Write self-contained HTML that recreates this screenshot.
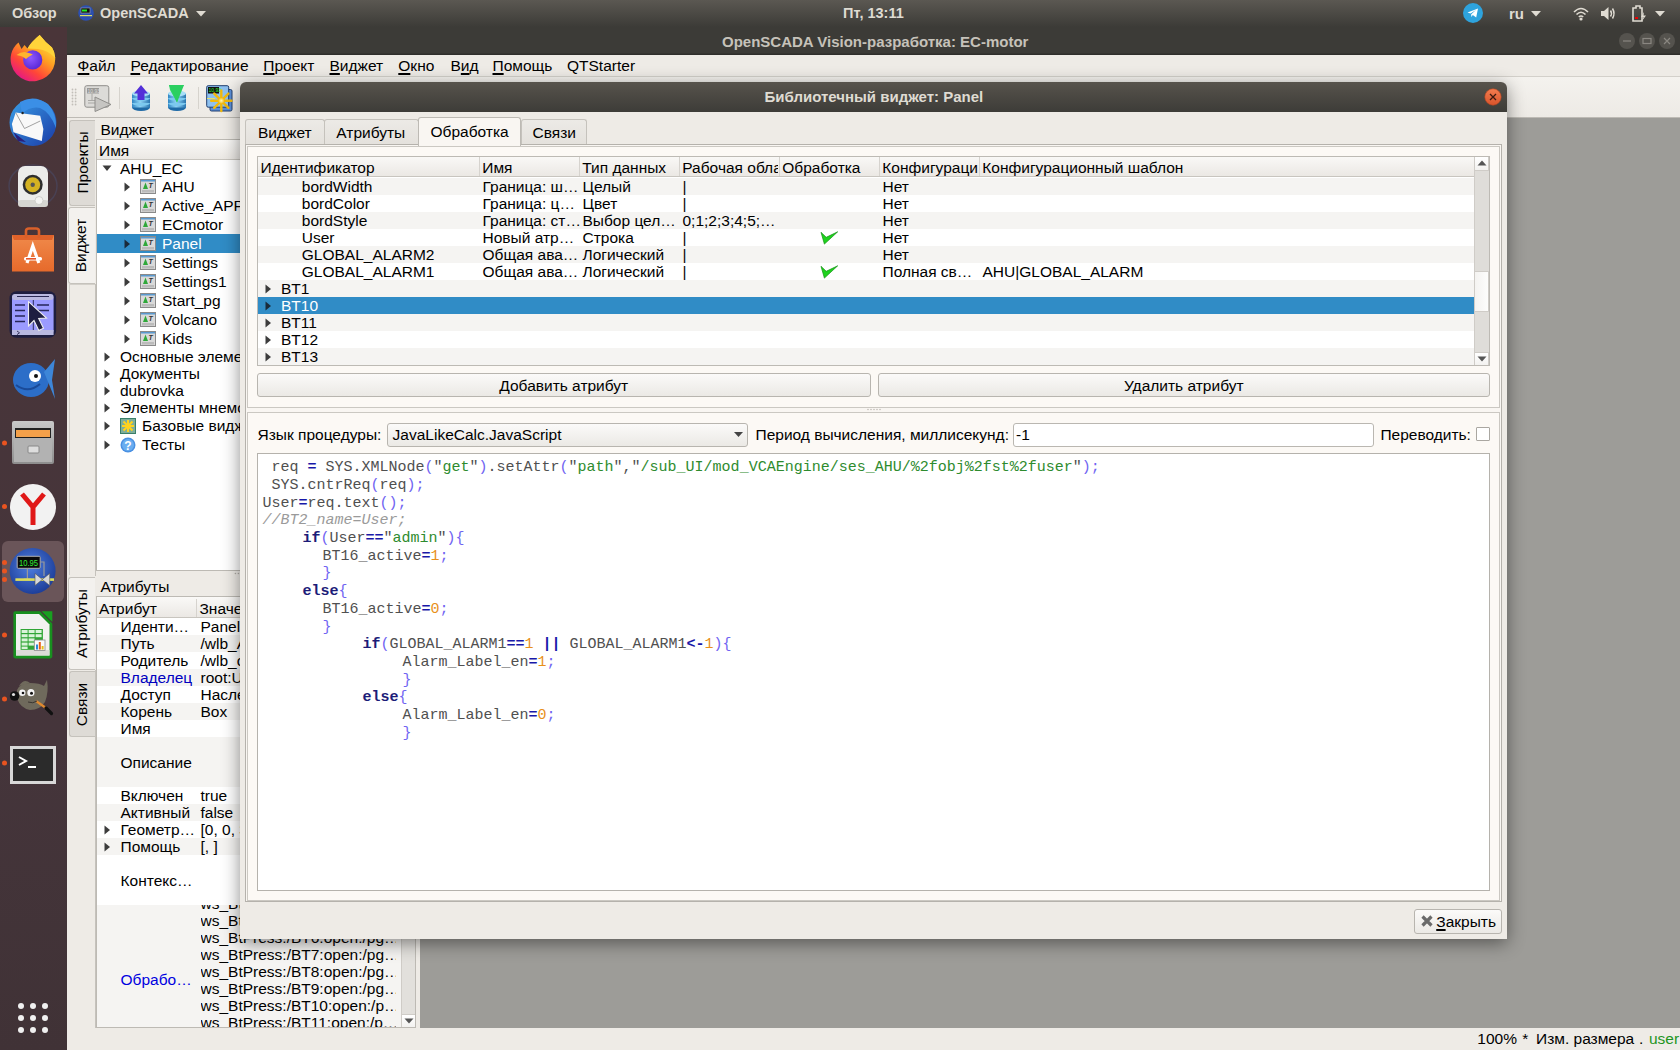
<!DOCTYPE html>
<html><head><meta charset="utf-8">
<style>
*{box-sizing:border-box}
html,body{margin:0;padding:0}
body{width:1680px;height:1050px;overflow:hidden;position:relative;font-family:"Liberation Sans",sans-serif;font-size:15.5px;color:#000;background:#9d9c98}
.a{position:absolute}
u{text-decoration-thickness:1.6px;text-underline-offset:2.2px}
.t{position:absolute;white-space:nowrap;line-height:17px}
#top{left:0;top:0;width:1680px;height:27px;background:linear-gradient(#5b5852,#3c3b37)}
#top .t{color:#dfdbd2;font-weight:bold;font-size:14.5px}
#dock{left:0;top:27px;width:67px;height:1023px;background:linear-gradient(#4a3539,#45353b 70%,#403236)}
#wt{left:67px;top:27px;width:1613px;height:28px;background:linear-gradient(#3c3b37 0,#3c3b37 26px,#2f2e2b 27px,#2f2e2b 28px)}
#menu{left:67px;top:55px;width:1613px;height:22px;background:#eeebe6;border-bottom:1px solid #d3d0ca}
#tool{left:67px;top:77px;width:1613px;height:41px;background:linear-gradient(#f4f2ee,#edeae5);border-bottom:1px solid #bdbab4}
#ldock{left:67px;top:118px;width:353px;height:910px;background:#eeebe6}
#mdi{left:422px;top:119px;width:1258px;height:909px;background:#9d9c98}
#status{left:67px;top:1028px;width:1613px;height:22px;background:#eeebe6}
#dlg{left:240px;top:82px;width:1267px;height:857px;background:#eeebe6;border-radius:6px 6px 0 0;box-shadow:0 4px 18px rgba(0,0,0,.45)}
#dtitle{left:0;top:0;width:1267px;height:30px;border-radius:6px 6px 0 0;background:linear-gradient(#57534c,#3d3c38)}
.vt{display:flex;align-items:center;justify-content:center}.vt span{display:block;transform:rotate(-90deg);white-space:nowrap;line-height:17px}
.btn{background:linear-gradient(#fbfaf9,#ebe9e5);border:1px solid #b8b5af;border-radius:3px}
.cl{position:absolute;white-space:pre;font-family:"Liberation Mono",monospace;font-size:15px;line-height:17.71px;color:#505050}
.cl .k{color:#1c1c78;font-weight:bold}.cl .o{color:#1818a8;font-weight:bold}.cl .p{color:#7064f2}.cl .s{color:#2e8b2e}.cl .n{color:#e8901a}.cl .c{color:#9a9a9a;font-style:italic}
</style></head><body>
<div id="top" class="a">
  <div class="t" style="left:12px;top:5px">Обзор</div>
  <svg class="a" style="left:78px;top:5px" width="16" height="16"><circle cx="8" cy="8" r="7.8" fill="#2c4fb0"/><rect x="3" y="3" width="9" height="5" fill="#111" stroke="#aaa" stroke-width=".6"/><rect x="4" y="4.5" width="5" height="2" fill="#2e2"/><rect x="2" y="10" width="12" height="1.2" fill="#dd6"/></svg>
  <div class="t" style="left:100px;top:5px">OpenSCADA</div>
  <svg class="a" style="left:196px;top:11px" width="10" height="6"><path d="M0 0 L10 0 L5 5.5 Z" fill="#dfdbd2"/></svg>
  <div class="t" style="left:843px;top:5px">Пт, 13:11</div>
  <svg class="a" style="left:1463px;top:3px" width="20" height="20"><circle cx="10" cy="10" r="10" fill="#2ea3dd"/><path d="M4.5 9.5 L15 5.5 L13.2 14.5 L9.8 12 L8.3 14 L8.2 11.2 L13 7 L7.5 10.6 Z" fill="#fff"/></svg>
  <div class="t" style="left:1509px;top:5px;font-size:15px">ru</div>
  <svg class="a" style="left:1531px;top:11px" width="10" height="6"><path d="M0 0 L10 0 L5 5.5 Z" fill="#dfdbd2"/></svg>
  <svg class="a" style="left:1573px;top:6px" width="16" height="15"><path d="M1 6 Q8 -1 15 6" stroke="#dfdbd2" stroke-width="1.6" fill="none"/><path d="M3.5 8.5 Q8 4 12.5 8.5" stroke="#dfdbd2" stroke-width="1.6" fill="none"/><path d="M5.8 11 Q8 9 10.2 11" stroke="#dfdbd2" stroke-width="1.6" fill="none"/><circle cx="8" cy="13" r="1.6" fill="#dfdbd2"/></svg>
  <svg class="a" style="left:1600px;top:6px" width="17" height="15"><path d="M1 5 L4 5 L8.5 1 L8.5 14 L4 10 L1 10 Z" fill="#dfdbd2"/><path d="M10.5 4.5 Q12.5 7.5 10.5 10.5 M12.5 2.5 Q15.5 7.5 12.5 12.5" stroke="#dfdbd2" stroke-width="1.5" fill="none"/></svg>
  <svg class="a" style="left:1631px;top:5px" width="16" height="17"><path d="M2 3 L5 3 L5 1 L9 1 L9 3 L11 3 L11 16 L2 16 Z" fill="none" stroke="#dfdbd2" stroke-width="1.6"/><rect x="4" y="12" width="3" height="2" fill="#e00"/><path d="M13 7 L10 12 L12.5 12 L11 16 L15 10.5 L12.5 10.5 Z" fill="#dfdbd2"/></svg>
  <svg class="a" style="left:1655px;top:11px" width="10" height="6"><path d="M0 0 L10 0 L5 5.5 Z" fill="#dfdbd2"/></svg>
</div>
<div id="dock" class="a"><svg width="67" height="1023" viewBox="0 27 67 1023" style="position:absolute;left:0;top:0">
<!-- firefox -->
<defs>
<linearGradient id="ffl" x1="0.85" y1="0.15" x2="0.25" y2="1"><stop offset="0" stop-color="#ffe23c"/><stop offset="0.35" stop-color="#ff9e22"/><stop offset="0.68" stop-color="#ff4638"/><stop offset="1" stop-color="#e3148c"/></linearGradient>
<radialGradient id="ffp" cx="0.4" cy="0.4" r="0.6"><stop offset="0" stop-color="#9059ff"/><stop offset="1" stop-color="#5b2bd8"/></radialGradient>
<linearGradient id="tbg" x1="0" y1="0" x2="1" y2="1"><stop offset="0" stop-color="#3aa0e8"/><stop offset="1" stop-color="#1a3aa6"/></linearGradient>
<linearGradient id="bag" x1="0" y1="0" x2="0" y2="1"><stop offset="0" stop-color="#f08a4b"/><stop offset="1" stop-color="#e66a2b"/></linearGradient>
<radialGradient id="osc" cx="0.45" cy="0.4" r="0.6"><stop offset="0" stop-color="#4f7fe0"/><stop offset="1" stop-color="#1e3f9a"/></radialGradient>
<linearGradient id="fil" x1="0" y1="0" x2="0" y2="1"><stop offset="0" stop-color="#c9c9c9"/><stop offset="1" stop-color="#8d8d8d"/></linearGradient>
</defs>
<path d="M18.5 42.5 L21.5 49 L24.5 45 L27.5 48.5 Q31 42 39.7 35 Q45 42 52 47.5 A22.3 22.3 0 1 1 11.2 54 Q13 47 18.5 42.5 Z" fill="url(#ffl)"/>
<path d="M27.5 48.5 Q31 42 39.7 35 Q45 42 52 47.5 Q55 52 55.3 58 Q48 50 38 49 Z" fill="#ffd43a"/>
<circle cx="32.7" cy="59.9" r="9.6" fill="url(#ffp)"/>
<path d="M16.5 55 Q22 51 27 52.5 Q31 53.5 32.8 54.6 Q29 56.5 26 59 Q23 56 16.5 55 Z" fill="#ffb52e"/>
<!-- thunderbird -->
<circle cx="33" cy="122.5" r="23.5" fill="url(#tbg)"/>
<path d="M20 102 Q34 94 48 104 Q57 114 56 128 Q50 112 40 108 Q30 106 22 114 Z" fill="#3b8fe6"/>
<path d="M11.9 124.1 L15.7 112.6 L40.2 115.8 L43.4 129.1 L41.8 140.9 L13.5 132.3 Z" fill="#f8f8f8"/>
<path d="M15.7 112.6 L24.5 128.5 L40.2 121" stroke="#8a8a8a" stroke-width=".8" fill="none"/>
<path d="M13.5 132.3 L18 141 L26 142 Z" fill="#2a1f7a"/>
<circle cx="22.6" cy="113" r="1.2" fill="#222"/>
<!-- rhythmbox -->
<ellipse cx="33" cy="186" rx="24" ry="21" fill="none" stroke="#4a4e6e" stroke-width="1.5" opacity=".5"/>
<rect x="18" y="166" width="30" height="41" rx="7" fill="#ececea"/>
<rect x="18" y="200" width="30" height="7" rx="3" fill="#d6d6d2"/>
<circle cx="32.7" cy="184.7" r="10" fill="#2e2e2e"/><circle cx="32.7" cy="184.7" r="7.5" fill="#d4b222"/><circle cx="32.7" cy="184.7" r="2.2" fill="#555"/>
<circle cx="39" cy="200.5" r="4" fill="#f4f4f2" stroke="#c8c8c4" stroke-width=".8"/>
<!-- software -->
<rect x="12" y="235" width="42" height="36.5" fill="url(#bag)"/>
<path d="M12 235 L54 235 L52 240 L14 240 Z" fill="#e0622a"/>
<path d="M26 238 L26 231 Q26 228.5 29 228.5 L36 228.5 Q39 228.5 39 231 L39 238" fill="none" stroke="#d9602a" stroke-width="2.6"/>
<path d="M27 263 L32.8 246 L38.8 263" stroke="#fff" stroke-width="3.2" fill="none"/>
<rect x="24" y="257" width="18" height="3.5" rx="1.5" fill="#fff"/><rect x="26" y="258" width="10" height="1.6" fill="#e6572a"/>
<!-- screen -->
<rect x="9.5" y="291.2" width="46.6" height="46.6" rx="7" fill="#1e1e40"/>
<rect x="12" y="294" width="41.6" height="41" rx="5" fill="#9b9bff"/>
<rect x="12" y="294" width="41.6" height="6" rx="3" fill="#b9b9e0"/><path d="M17 296.5 h32" stroke="#2a2a55" stroke-width="1"/>
<rect x="12" y="330" width="41.6" height="5" fill="#b9b9e0"/><path d="M17 331 l2.5 1.8 l-2.5 1.8" stroke="#2a2a55" stroke-width=".9" fill="none"/>
<path d="M33.3 300 v30" stroke="#2a2a55" stroke-width="1"/>
<path d="M15 305 h10 M15 310.5 h10 M15 316 h10 M15 321.5 h10 M37 305 h12 M37 310.5 h12" stroke="#26265a" stroke-width="1.5"/>
<path d="M28.5 301.7 L28.5 326 L34 320.5 L38.8 330.5 L43.5 328.3 L38.7 318.5 L46.5 318 Z" fill="#1e1e40" stroke="#eee" stroke-width="1.1"/>
<!-- fish -->
<ellipse cx="31" cy="380" rx="18" ry="17" fill="#2c6ec8"/>
<path d="M44 372 L55 359 L52 380 L55 399 Z" fill="#3d86d8"/>
<circle cx="35" cy="376" r="6" fill="#fff"/><circle cx="36" cy="376" r="2" fill="#111"/>
<path d="M16 385 Q28 394 40 384" stroke="#1a4a98" stroke-width="2" fill="none"/>
<!-- files -->
<rect x="12" y="421" width="42" height="43" rx="2" fill="url(#fil)"/>
<rect x="15" y="428" width="36" height="10" fill="#222"/>
<rect x="16" y="430" width="34" height="7" fill="#f3a04a"/>
<rect x="14" y="438" width="38" height="24" fill="#b2b2b2"/>
<rect x="28" y="446" width="11" height="7" rx="1" fill="#ddd" stroke="#888"/>
<circle cx="4.5" cy="443" r="2.5" fill="#e95420"/>
<!-- yandex -->
<circle cx="33" cy="507" r="23" fill="#f2f2f2"/>
<path d="M22 494 L33 507 L44 494 M33 507 L33 525" stroke="#e01818" stroke-width="5" fill="none"/>
<circle cx="4.5" cy="506.5" r="2.5" fill="#e95420"/>
<!-- openscada -->
<rect x="2" y="541" width="62" height="61" rx="6" fill="#6a5559"/>
<circle cx="32.6" cy="571" r="23" fill="url(#osc)"/>
<rect x="17.2" y="556.3" width="23" height="12" rx="1" fill="#0a0a0a" stroke="#b0b0b0" stroke-width="1"/>
<text x="19" y="565.8" font-family="Liberation Sans" font-size="8.5" fill="#33ee33" textLength="19" lengthAdjust="spacingAndGlyphs">10.95</text>
<path d="M27.4 568.3 L27.4 579 M24 579 h7 M40.5 562 L44 562 L44 576" stroke="#9a9a9a" stroke-width="1.2" fill="none"/>
<rect x="15.4" y="578.3" width="38.6" height="2.6" fill="#dede5a"/>
<path d="M35 573.4 L42.3 579.5 L49.7 573.4 L49.7 585.5 L42.3 579.5 L35 585.5 Z" fill="#d8d8d8" stroke="#555" stroke-width=".6"/>
<circle cx="4.5" cy="562.5" r="2.5" fill="#e95420"/><circle cx="4.5" cy="571" r="2.5" fill="#e95420"/><circle cx="4.5" cy="579.5" r="2.5" fill="#e95420"/>
<!-- calc -->
<path d="M13.4 613 Q13.4 611.2 15.2 611.2 L40 611.2 L52.3 623.5 L52.3 656.6 Q52.3 658.4 50.5 658.4 L15.2 658.4 Q13.4 658.4 13.4 656.6 Z" fill="#18901f"/>
<path d="M16 614 L39 614 L49.5 624.5 L49.5 655.5 L16 655.5 Z" fill="#f2f2f0"/>
<path d="M16 650 L49.5 650 L49.5 655.5 L16 655.5 Z" fill="#dcdcd8"/>
<path d="M41.5 611.2 L52.3 611.2 L52.3 622 Z" fill="#18a020"/>
<rect x="20.6" y="629" width="22.3" height="20.8" fill="#2fa535"/>
<g fill="#d9f3d9"><rect x="21.6" y="630" width="6" height="3"/><rect x="28.6" y="630" width="6" height="3"/><rect x="35.6" y="630" width="6" height="3"/><rect x="21.6" y="634.2" width="6" height="3"/><rect x="28.6" y="634.2" width="6" height="3"/><rect x="35.6" y="634.2" width="6" height="3"/><rect x="21.6" y="638.4" width="6" height="3"/><rect x="28.6" y="638.4" width="6" height="3"/><rect x="21.6" y="642.6" width="6" height="3"/><rect x="28.6" y="642.6" width="6" height="3"/><rect x="21.6" y="646.6" width="6" height="2.4"/></g>
<rect x="34.3" y="640" width="10.7" height="10.6" fill="#fafafa" stroke="#8a8a8a" stroke-width=".8"/>
<rect x="36" y="644.5" width="2" height="5" fill="#2a8ad8"/><rect x="38.8" y="642" width="2" height="7.5" fill="#e8601a"/><rect x="41.6" y="646" width="2" height="3.5" fill="#e8c01a"/>
<circle cx="4.5" cy="635" r="2.5" fill="#e95420"/>
<!-- gimp -->
<path d="M17 690 Q20 683 30 683 Q40 683 44 686 Q47 680 47 679.8 Q49 692 45 702 Q40 710 30 710 Q20 708 17 698 Z" fill="#6f6a5c"/>
<path d="M19 686 Q24 678 30 683 Z" fill="#6f6a5c"/>
<circle cx="14.6" cy="696" r="4.8" fill="#111"/><circle cx="13.5" cy="694.5" r="1.6" fill="#ddd"/>
<circle cx="22.3" cy="692.7" r="3.2" fill="#f4f4f4"/><circle cx="23" cy="693" r="1.3" fill="#111"/>
<circle cx="30.9" cy="692.7" r="3.6" fill="#f4f4f4"/><circle cx="31.5" cy="693.2" r="1.5" fill="#111"/>
<path d="M36 701 L46 708" stroke="#e08a30" stroke-width="2.2"/><path d="M46 708 L51.5 713.5" stroke="#111" stroke-width="3.2" stroke-linecap="round"/>
<path d="M28 702 Q33 704 37 701" stroke="#3a3630" stroke-width="1" fill="none"/>
<circle cx="4.5" cy="699" r="2.5" fill="#e95420"/>
<!-- terminal -->
<rect x="10" y="746" width="46" height="38" fill="#d8d8d8"/>
<rect x="13" y="749" width="40" height="32" fill="#2b2b2b"/>
<path d="M19 757 L26 761 L19 765" stroke="#fff" stroke-width="2" fill="none"/><path d="M28 767 h8" stroke="#fff" stroke-width="2"/>
<circle cx="4.5" cy="763" r="2.5" fill="#e95420"/>
<!-- app grid -->
<g fill="#f0f0f0"><circle cx="21" cy="1006" r="3"/><circle cx="33" cy="1006" r="3"/><circle cx="45" cy="1006" r="3"/>
<circle cx="21" cy="1018" r="3"/><circle cx="33" cy="1018" r="3"/><circle cx="45" cy="1018" r="3"/>
<circle cx="21" cy="1030" r="3"/><circle cx="33" cy="1030" r="3"/><circle cx="45" cy="1030" r="3"/></g>
</svg></div>
<div id="wt" class="a">
  <div class="t" style="left:655px;top:6px;color:#c6c2ba;font-weight:bold;font-size:15px">OpenSCADA Vision-разработка: EC-motor</div>
  <svg class="a" style="left:1551px;top:6px" width="60" height="17">
    <circle cx="9" cy="8" r="8" fill="#55534e"/><path d="M5 8 h8" stroke="#8a8781" stroke-width="1.2"/>
    <circle cx="29" cy="8" r="8" fill="#55534e"/><rect x="25" y="5.5" width="8" height="5" fill="none" stroke="#8a8781" stroke-width="1.2"/>
    <circle cx="49" cy="8" r="8" fill="#55534e"/><path d="M46 5 L52 11 M52 5 L46 11" stroke="#8a8781" stroke-width="1.2"/>
  </svg>
</div>
<div id="menu" class="a">
  <div class="t" style="left:10.5px;top:2px"><u>Ф</u>айл</div>
  <div class="t" style="left:63.5px;top:2px"><u>Р</u>едактирование</div>
  <div class="t" style="left:196.3px;top:2px"><u>П</u>роект</div>
  <div class="t" style="left:262.5px;top:2px"><u>В</u>иджет</div>
  <div class="t" style="left:331.3px;top:2px"><u>О</u>кно</div>
  <div class="t" style="left:383.5px;top:2px">В<u>и</u>д</div>
  <div class="t" style="left:425.5px;top:2px"><u>П</u>омощь</div>
  <div class="t" style="left:500px;top:2px">QTStarter</div>
</div>
<div id="tool" class="a">
  <svg class="a" style="left:0;top:0" width="200" height="41">
    <defs>
      <linearGradient id="dbg" x1="0" y1="0" x2="1" y2="0"><stop offset="0" stop-color="#2f86c4"/><stop offset=".45" stop-color="#8fd3f4"/><stop offset="1" stop-color="#2a76b0"/></linearGradient>
      <radialGradient id="star" cx=".5" cy=".5" r=".5"><stop offset="0" stop-color="#fff9c0"/><stop offset="1" stop-color="#f2b90c"/></radialGradient>
    </defs>
    <g fill="#c2bfb9"><circle cx="5.5" cy="12.5" r=".9"/><circle cx="8.6" cy="12.5" r=".9"/><circle cx="5.5" cy="15.5" r=".9"/><circle cx="8.6" cy="15.5" r=".9"/><circle cx="5.5" cy="18.5" r=".9"/><circle cx="8.6" cy="18.5" r=".9"/><circle cx="5.5" cy="21.5" r=".9"/><circle cx="8.6" cy="21.5" r=".9"/><circle cx="5.5" cy="24.5" r=".9"/><circle cx="8.6" cy="24.5" r=".9"/><circle cx="5.5" cy="27.5" r=".9"/><circle cx="8.6" cy="27.5" r=".9"/></g>
    <rect x="17.8" y="8.7" width="24" height="21.5" rx="2" fill="#dcdbd8" stroke="#8f8e8b" stroke-width="1"/>
    <rect x="20" y="11" width="12" height="5.5" fill="#9a9996"/><text x="20.6" y="15.6" font-family="Liberation Sans" font-size="5" fill="#dcdcdc">10.93</text>
    <path d="M25 16.5 v7 M21 23.5 h8 M21 26 h18" stroke="#a9a8a5" stroke-width="1"/>
    <path d="M28 20 L44 27.5 L28 34.5 Z" fill="#c6c5c2" stroke="#8f8e8b" stroke-width="1" stroke-linejoin="round"/>
    <path d="M52.5 10 v22" stroke="#d6d3cd" stroke-width="1"/>
    <g>
      <ellipse cx="74" cy="30.5" rx="9" ry="3.5" fill="#1f6aa6"/><rect x="65" y="26" width="18" height="4.5" fill="url(#dbg)"/><ellipse cx="74" cy="26" rx="9" ry="3" fill="#7cc9ef"/>
      <rect x="65" y="21" width="18" height="5" fill="url(#dbg)"/><ellipse cx="74" cy="21" rx="9" ry="3" fill="#7cc9ef"/>
      <rect x="65" y="16.5" width="18" height="4.5" fill="url(#dbg)"/><ellipse cx="74" cy="16.5" rx="9" ry="3" fill="#a8def7"/>
    </g>
    <path d="M74 8 L81 16.5 L77.5 16.5 L77.5 23 L70.5 23 L70.5 16.5 L67 16.5 Z" fill="#5330d8"/>
    <g>
      <ellipse cx="110" cy="30.5" rx="9" ry="3.5" fill="#1f6aa6"/><rect x="101" y="26" width="18" height="4.5" fill="url(#dbg)"/><ellipse cx="110" cy="26" rx="9" ry="3" fill="#7cc9ef"/>
      <rect x="101" y="21" width="18" height="5" fill="url(#dbg)"/><ellipse cx="110" cy="21" rx="9" ry="3" fill="#7cc9ef"/>
      <rect x="101" y="16.5" width="18" height="4.5" fill="url(#dbg)"/><ellipse cx="110" cy="16.5" rx="9" ry="3" fill="#a8def7"/>
    </g>
    <path d="M102 8 L117 8 L113 13 L113 13 L110 25.5 L103 13 Z" fill="#2fd66a"/><path d="M102 8 L117 8 L110 25.5 Z" fill="#2bcf60"/>
    <path d="M131.5 10 v22" stroke="#d6d3cd" stroke-width="1"/>
    <rect x="143" y="12.5" width="22" height="21.5" rx="1.5" fill="#5b8fd8" stroke="#233f6e" stroke-width="1"/>
    <rect x="139.7" y="8.7" width="22" height="21.5" rx="1.5" fill="#8ec1f0" stroke="#233f6e" stroke-width="1"/>
    <rect x="141" y="10" width="11" height="6.5" fill="#111"/><text x="141.6" y="15.2" font-family="Liberation Sans" font-size="5" fill="#33ee33">10.93</text>
    <path d="M140 21.5 h8" stroke="#e6e06a" stroke-width="1"/>
    <g stroke="#f2b90c" stroke-width="2.4" stroke-linecap="round"><path d="M154.3 13.5 v20.5 M144.2 23.7 h20.3 M147.2 16.6 l14.2 14.2 M161.4 16.6 l-14.2 14.2"/></g>
    <circle cx="154.3" cy="23.7" r="3.2" fill="url(#star)"/>
  </svg>
</div>
<div id="ldock" class="a">
  <!-- vertical tabs -->
  <div class="a" style="left:2px;top:1.5px;width:25.5px;height:86px;background:#dedbd6;border:1px solid #c5c2bc;border-right:none;border-radius:3px 0 0 3px"></div>
  <div class="a vt" style="left:2px;top:1.5px;width:25.5px;height:86px"><span>Проекты</span></div>
  <div class="a" style="left:0.5px;top:89px;width:27.5px;height:77px;background:#f3f1ee;border:1px solid #c5c2bc;border-right:none;border-radius:3px 0 0 3px"></div>
  <div class="a vt" style="left:0.5px;top:89px;width:27.5px;height:77px"><span>Виджет</span></div>
  <div class="a" style="left:2px;top:166px;width:26px;height:291px;border-left:1px solid #d3d0ca;border-top:1px solid #d3d0ca"></div>
  <div class="a" style="left:27.5px;top:166px;width:1px;height:292px;background:#c5c2bc"></div>
  <div class="a" style="left:0.5px;top:459px;width:27.5px;height:93px;background:#f3f1ee;border:1px solid #c5c2bc;border-right:none;border-radius:3px 0 0 3px"></div>
  <div class="a vt" style="left:0.5px;top:459px;width:27.5px;height:93px"><span>Атрибуты</span></div>
  <div class="a" style="left:2px;top:553px;width:25.5px;height:66px;background:#dedbd6;border:1px solid #c5c2bc;border-right:none;border-radius:3px 0 0 3px"></div>
  <div class="a vt" style="left:2px;top:553px;width:25.5px;height:66px"><span>Связи</span></div>
  <div class="a" style="left:27.5px;top:552px;width:1px;height:358px;background:#c5c2bc"></div>

  <div class="t" style="left:33.4px;top:3px">Виджет</div>
  <!-- tree -->
  <div class="a" id="tree" style="left:29px;top:21px;width:330px;height:431.5px;background:#fff;border:1px solid #bdbab4;overflow:hidden">
    <div class="a" style="left:0;top:0;width:330px;height:20px;background:linear-gradient(#faf9f7,#ebe8e4);border-bottom:1px solid #c8c5bf"></div>
    <div class="t" style="left:2px;top:1.5px">Имя</div>
    <div class="a" style="left:-1px;top:-1px;width:332px;height:434px">
<svg class="a" style="left:5.5px;top:26.0px" width="10" height="7"><path d="M0.5 0.5 L9.5 0.5 L5 6 Z" fill="#3c3c3c"/></svg>
<div class="t" style="left:24px;top:21.0px;color:#000">AHU_EC</div>
<svg class="a" style="left:27.5px;top:42.5px" width="7" height="10"><path d="M0.5 0.5 L6 5 L0.5 9.5 Z" fill="#3c3c3c"/></svg>
<svg class="a" style="left:44px;top:40.0px" width="16" height="15"><rect x=".5" y=".5" width="15" height="14" fill="#d9d9d9" stroke="#8a8a8a"/><rect x="1" y="1" width="14" height="1.5" fill="#5a9ad0"/><path d="M3 10 L5.5 3.5 L8 10 Z" fill="#2fa83a"/><text x="8.5" y="8.5" font-family="Liberation Sans" font-weight="bold" font-style="italic" font-size="7" fill="#333">T</text><rect x="2" y="11" width="12" height="2.5" fill="#bbb"/></svg>
<div class="t" style="left:66px;top:39.0px;color:#000">AHU</div>
<svg class="a" style="left:27.5px;top:61.5px" width="7" height="10"><path d="M0.5 0.5 L6 5 L0.5 9.5 Z" fill="#3c3c3c"/></svg>
<svg class="a" style="left:44px;top:59.0px" width="16" height="15"><rect x=".5" y=".5" width="15" height="14" fill="#d9d9d9" stroke="#8a8a8a"/><rect x="1" y="1" width="14" height="1.5" fill="#5a9ad0"/><path d="M3 10 L5.5 3.5 L8 10 Z" fill="#2fa83a"/><text x="8.5" y="8.5" font-family="Liberation Sans" font-weight="bold" font-style="italic" font-size="7" fill="#333">T</text><rect x="2" y="11" width="12" height="2.5" fill="#bbb"/></svg>
<div class="t" style="left:66px;top:58.0px;color:#000">Active_APP</div>
<svg class="a" style="left:27.5px;top:80.5px" width="7" height="10"><path d="M0.5 0.5 L6 5 L0.5 9.5 Z" fill="#3c3c3c"/></svg>
<svg class="a" style="left:44px;top:78.0px" width="16" height="15"><rect x=".5" y=".5" width="15" height="14" fill="#d9d9d9" stroke="#8a8a8a"/><rect x="1" y="1" width="14" height="1.5" fill="#5a9ad0"/><path d="M3 10 L5.5 3.5 L8 10 Z" fill="#2fa83a"/><text x="8.5" y="8.5" font-family="Liberation Sans" font-weight="bold" font-style="italic" font-size="7" fill="#333">T</text><rect x="2" y="11" width="12" height="2.5" fill="#bbb"/></svg>
<div class="t" style="left:66px;top:77.0px;color:#000">ECmotor</div>
<div class="a" style="left:1px;top:95px;width:330px;height:19px;background:#308cc6"></div>
<svg class="a" style="left:27.5px;top:99.5px" width="7" height="10"><path d="M0.5 0.5 L6 5 L0.5 9.5 Z" fill="#1a2a3a"/></svg>
<svg class="a" style="left:44px;top:97.0px" width="16" height="15"><rect x=".5" y=".5" width="15" height="14" fill="#d9d9d9" stroke="#8a8a8a"/><rect x="1" y="1" width="14" height="1.5" fill="#5a9ad0"/><path d="M3 10 L5.5 3.5 L8 10 Z" fill="#2fa83a"/><text x="8.5" y="8.5" font-family="Liberation Sans" font-weight="bold" font-style="italic" font-size="7" fill="#333">T</text><rect x="2" y="11" width="12" height="2.5" fill="#bbb"/></svg>
<div class="t" style="left:66px;top:96.0px;color:#fff">Panel</div>
<svg class="a" style="left:27.5px;top:118.5px" width="7" height="10"><path d="M0.5 0.5 L6 5 L0.5 9.5 Z" fill="#3c3c3c"/></svg>
<svg class="a" style="left:44px;top:116.0px" width="16" height="15"><rect x=".5" y=".5" width="15" height="14" fill="#d9d9d9" stroke="#8a8a8a"/><rect x="1" y="1" width="14" height="1.5" fill="#5a9ad0"/><path d="M3 10 L5.5 3.5 L8 10 Z" fill="#2fa83a"/><text x="8.5" y="8.5" font-family="Liberation Sans" font-weight="bold" font-style="italic" font-size="7" fill="#333">T</text><rect x="2" y="11" width="12" height="2.5" fill="#bbb"/></svg>
<div class="t" style="left:66px;top:115.0px;color:#000">Settings</div>
<svg class="a" style="left:27.5px;top:137.5px" width="7" height="10"><path d="M0.5 0.5 L6 5 L0.5 9.5 Z" fill="#3c3c3c"/></svg>
<svg class="a" style="left:44px;top:135.0px" width="16" height="15"><rect x=".5" y=".5" width="15" height="14" fill="#d9d9d9" stroke="#8a8a8a"/><rect x="1" y="1" width="14" height="1.5" fill="#5a9ad0"/><path d="M3 10 L5.5 3.5 L8 10 Z" fill="#2fa83a"/><text x="8.5" y="8.5" font-family="Liberation Sans" font-weight="bold" font-style="italic" font-size="7" fill="#333">T</text><rect x="2" y="11" width="12" height="2.5" fill="#bbb"/></svg>
<div class="t" style="left:66px;top:134.0px;color:#000">Settings1</div>
<svg class="a" style="left:27.5px;top:156.5px" width="7" height="10"><path d="M0.5 0.5 L6 5 L0.5 9.5 Z" fill="#3c3c3c"/></svg>
<svg class="a" style="left:44px;top:154.0px" width="16" height="15"><rect x=".5" y=".5" width="15" height="14" fill="#d9d9d9" stroke="#8a8a8a"/><rect x="1" y="1" width="14" height="1.5" fill="#5a9ad0"/><path d="M3 10 L5.5 3.5 L8 10 Z" fill="#2fa83a"/><text x="8.5" y="8.5" font-family="Liberation Sans" font-weight="bold" font-style="italic" font-size="7" fill="#333">T</text><rect x="2" y="11" width="12" height="2.5" fill="#bbb"/></svg>
<div class="t" style="left:66px;top:153.0px;color:#000">Start_pg</div>
<svg class="a" style="left:27.5px;top:175.5px" width="7" height="10"><path d="M0.5 0.5 L6 5 L0.5 9.5 Z" fill="#3c3c3c"/></svg>
<svg class="a" style="left:44px;top:173.0px" width="16" height="15"><rect x=".5" y=".5" width="15" height="14" fill="#d9d9d9" stroke="#8a8a8a"/><rect x="1" y="1" width="14" height="1.5" fill="#5a9ad0"/><path d="M3 10 L5.5 3.5 L8 10 Z" fill="#2fa83a"/><text x="8.5" y="8.5" font-family="Liberation Sans" font-weight="bold" font-style="italic" font-size="7" fill="#333">T</text><rect x="2" y="11" width="12" height="2.5" fill="#bbb"/></svg>
<div class="t" style="left:66px;top:172.0px;color:#000">Volcano</div>
<svg class="a" style="left:27.5px;top:194.5px" width="7" height="10"><path d="M0.5 0.5 L6 5 L0.5 9.5 Z" fill="#3c3c3c"/></svg>
<svg class="a" style="left:44px;top:192.0px" width="16" height="15"><rect x=".5" y=".5" width="15" height="14" fill="#d9d9d9" stroke="#8a8a8a"/><rect x="1" y="1" width="14" height="1.5" fill="#5a9ad0"/><path d="M3 10 L5.5 3.5 L8 10 Z" fill="#2fa83a"/><text x="8.5" y="8.5" font-family="Liberation Sans" font-weight="bold" font-style="italic" font-size="7" fill="#333">T</text><rect x="2" y="11" width="12" height="2.5" fill="#bbb"/></svg>
<div class="t" style="left:66px;top:191.0px;color:#000">Kids</div>
<svg class="a" style="left:8px;top:212.5px" width="7" height="10"><path d="M0.5 0.5 L6 5 L0.5 9.5 Z" fill="#3c3c3c"/></svg>
<div class="t" style="left:24px;top:209.0px;color:#000">Основные элементы</div>
<svg class="a" style="left:8px;top:229.5px" width="7" height="10"><path d="M0.5 0.5 L6 5 L0.5 9.5 Z" fill="#3c3c3c"/></svg>
<div class="t" style="left:24px;top:226.0px;color:#000">Документы</div>
<svg class="a" style="left:8px;top:246.5px" width="7" height="10"><path d="M0.5 0.5 L6 5 L0.5 9.5 Z" fill="#3c3c3c"/></svg>
<div class="t" style="left:24px;top:243.0px;color:#000">dubrovka</div>
<svg class="a" style="left:8px;top:263.5px" width="7" height="10"><path d="M0.5 0.5 L6 5 L0.5 9.5 Z" fill="#3c3c3c"/></svg>
<div class="t" style="left:24px;top:260.0px;color:#000">Элементы мнемосхем</div>
<svg class="a" style="left:8px;top:281.5px" width="7" height="10"><path d="M0.5 0.5 L6 5 L0.5 9.5 Z" fill="#3c3c3c"/></svg>
<svg class="a" style="left:24px;top:278.5px" width="16" height="16"><rect x="0" y="0" width="16" height="16" fill="#3a7f6a"/><rect x="1" y="1" width="14" height="14" fill="#7fae9a"/><path d="M8 2 v12 M2 8 h12 M3.5 3.5 l9 9 M12.5 3.5 l-9 9" stroke="#ffd21e" stroke-width="2"/></svg>
<div class="t" style="left:46px;top:278.0px;color:#000">Базовые виджеты</div>
<svg class="a" style="left:8px;top:300.5px" width="7" height="10"><path d="M0.5 0.5 L6 5 L0.5 9.5 Z" fill="#3c3c3c"/></svg>
<svg class="a" style="left:24px;top:297.5px" width="16" height="16"><circle cx="8" cy="8" r="7.5" fill="#4a90e2"/><circle cx="8" cy="8" r="6" fill="#6aaef0"/><text x="4.3" y="12.5" font-family="Liberation Sans" font-weight="bold" font-size="12" fill="#fff">?</text></svg>
<div class="t" style="left:46px;top:297.0px;color:#000">Тесты</div>
    </div>
  </div>
<div class="t" style="left:33.4px;top:460px">Атрибуты</div>
  <svg class="a" style="left:167px;top:454px" width="6" height="3"><circle cx="1.4" cy="1.5" r=".8" fill="#b0ada7"/><circle cx="4.4" cy="1.5" r=".8" fill="#b0ada7"/></svg>
  <div class="a" style="left:29px;top:478px;width:320px;height:432px;border:1px solid #bdbab4;overflow:hidden;background:#fff">
   <div class="a" style="left:-1px;top:0px;width:320px;height:432px">
   <div class="a" style="left:0;top:0;width:320px;height:21px;background:linear-gradient(#faf9f7,#ebe8e4);border-bottom:1px solid #c8c5bf"></div>
   <div class="a" style="left:100px;top:2px;width:1px;height:18px;background:#d6d3ce"></div>
   <div class="t" style="left:3px;top:2.5px">Атрибут</div>
   <div class="t" style="left:103.5px;top:2.5px">Значение</div>
<div class="a" style="left:0;top:21px;width:320px;height:17px;background:#ffffff"></div>
<div class="t" style="left:24.5px;top:21.0px">Иденти…</div>
<div class="t" style="left:104.5px;top:21.0px">Panel</div>
<div class="a" style="left:0;top:38px;width:320px;height:17px;background:#f5f4f2"></div>
<div class="t" style="left:24.5px;top:38.0px">Путь</div>
<div class="t" style="left:104.5px;top:38.0px">/wlb_AHU_EC/wdg_Panel</div>
<div class="a" style="left:0;top:55px;width:320px;height:17px;background:#ffffff"></div>
<div class="t" style="left:24.5px;top:55.0px">Родитель</div>
<div class="t" style="left:104.5px;top:55.0px">/wlb_originals/wdg_Box</div>
<div class="a" style="left:0;top:72px;width:320px;height:17px;background:#f5f4f2"></div>
<div class="t" style="left:24.5px;top:72.0px"><span style="color:#0000c0">Владелец</span></div>
<div class="t" style="left:104.5px;top:72.0px">root:UI</div>
<div class="a" style="left:0;top:89px;width:320px;height:17px;background:#ffffff"></div>
<div class="t" style="left:24.5px;top:89.0px">Доступ</div>
<div class="t" style="left:104.5px;top:89.0px">Наследовать</div>
<div class="a" style="left:0;top:106px;width:320px;height:17px;background:#f5f4f2"></div>
<div class="t" style="left:24.5px;top:106.0px">Корень</div>
<div class="t" style="left:104.5px;top:106.0px">Box</div>
<div class="a" style="left:0;top:123px;width:320px;height:17px;background:#ffffff"></div>
<div class="t" style="left:24.5px;top:123.0px">Имя</div>
<div class="a" style="left:0;top:140px;width:320px;height:50px;background:#f5f4f2"></div>
<div class="t" style="left:24.5px;top:156.5px">Описание</div>
<div class="a" style="left:0;top:190px;width:320px;height:17px;background:#ffffff"></div>
<div class="t" style="left:24.5px;top:190.0px">Включен</div>
<div class="t" style="left:104.5px;top:190.0px">true</div>
<div class="a" style="left:0;top:207px;width:320px;height:17px;background:#f5f4f2"></div>
<div class="t" style="left:24.5px;top:207.0px">Активный</div>
<div class="t" style="left:104.5px;top:207.0px">false</div>
<div class="a" style="left:0;top:224px;width:320px;height:17px;background:#ffffff"></div>
<svg class="a" style="left:8px;top:227.5px" width="7" height="10"><path d="M0.5 0.5 L6 5 L0.5 9.5 Z" fill="#3c3c3c"/></svg>
<div class="t" style="left:24.5px;top:224.0px">Геометр…</div>
<div class="t" style="left:104.5px;top:224.0px">[0, 0, 300, 300, 1, 1, 0]</div>
<div class="a" style="left:0;top:241px;width:320px;height:17px;background:#f5f4f2"></div>
<svg class="a" style="left:8px;top:244.5px" width="7" height="10"><path d="M0.5 0.5 L6 5 L0.5 9.5 Z" fill="#3c3c3c"/></svg>
<div class="t" style="left:24.5px;top:241.0px">Помощь</div>
<div class="t" style="left:104.5px;top:241.0px">[, ]</div>
<div class="a" style="left:0;top:258px;width:320px;height:50px;background:#ffffff"></div>
<div class="t" style="left:24.5px;top:274.5px">Контекс…</div>
<div class="a" style="left:0;top:308px;width:320px;height:123px;background:#f5f4f2"></div>
<div class="t" style="left:24.5px;top:374.3px"><span style="color:#0000e0">Обрабо…</span></div>
<div class="a" style="left:99.5px;top:308px;width:210px;height:123px;overflow:hidden"><div class="t" style="left:5px;top:-10.0px;width:195px;overflow:hidden">ws_BtPress:/BT4:open:/pg…</div>
<div class="t" style="left:5px;top:7.0px;width:195px;overflow:hidden">ws_BtPress:/BT5:open:/pg…</div>
<div class="t" style="left:5px;top:24.0px;width:195px;overflow:hidden">ws_BtPress:/BT6:open:/pg…</div>
<div class="t" style="left:5px;top:41.0px;width:195px;overflow:hidden">ws_BtPress:/BT7:open:/pg…</div>
<div class="t" style="left:5px;top:58.0px;width:195px;overflow:hidden">ws_BtPress:/BT8:open:/pg…</div>
<div class="t" style="left:5px;top:75.0px;width:195px;overflow:hidden">ws_BtPress:/BT9:open:/pg…</div>
<div class="t" style="left:5px;top:92.0px;width:195px;overflow:hidden">ws_BtPress:/BT10:open:/p…</div>
<div class="t" style="left:5px;top:109.0px;width:195px;overflow:hidden">ws_BtPress:/BT11:open:/p…</div></div>
   <div class="a" style="left:305px;top:21px;width:15px;height:411px;background:#e2e0dc;border-left:1px solid #cfccc7"></div>
   <div class="a" style="left:305px;top:417px;width:15px;height:14px;background:linear-gradient(#fff,#f3f2f0);border:1px solid #cfccc7"></div>
   <svg class="a" style="left:307.5px;top:421px" width="10" height="6"><path d="M0.5 0.5 L9.5 0.5 L5 5.5 Z" fill="#555"/></svg>
   </div>
  </div>
</div>
<div id="mdi" class="a"></div>
<div id="status" class="a">
  <div class="t" style="left:1410.3px;top:2.2px">100%</div>
  <div class="t" style="left:1455.3px;top:2.2px">*</div>
  <div class="t" style="left:1469px;top:2.2px">Изм. размера</div>
  <div class="t" style="left:1572px;top:2.2px">.</div>
  <div class="t" style="left:1582px;top:2.2px;color:#1f951f">user</div>
</div>
<div id="dlg" class="a">
<div id="dtitle" class="a"></div>
<div class="t" style="left:524.5px;top:6.3px;font-weight:bold;font-size:15px;color:#dfdbd2">Библиотечный виджет: Panel</div>
<svg class="a" style="left:1244px;top:6px" width="18" height="18"><defs><linearGradient id="clg" x1="0" y1="0" x2="0" y2="1"><stop offset="0" stop-color="#f37d4f"/><stop offset="1" stop-color="#d9542b"/></linearGradient></defs><circle cx="9" cy="9" r="8.2" fill="url(#clg)" stroke="#b84420" stroke-width=".6"/><path d="M6 6 L12 12 M12 6 L6 12" stroke="#3a1a10" stroke-width="1.3"/></svg>
<div class="a" style="left:5.4px;top:37px;width:79.89999999999999px;height:26px;background:linear-gradient(#eceae6,#e4e1dc);border:1px solid #c5c2bc;border-bottom:none;border-radius:3px 3px 0 0"></div>
<div class="t" style="left:18px;top:41.7px;">Виджет</div>
<div class="a" style="left:84.3px;top:37px;width:94.7px;height:26px;background:linear-gradient(#eceae6,#e4e1dc);border:1px solid #c5c2bc;border-bottom:none;border-radius:3px 3px 0 0"></div>
<div class="t" style="left:96.3px;top:41.7px;">Атрибуты</div>
<div class="a" style="left:178px;top:35px;width:102.5px;height:28.5px;background:#f9f6f2;border:1px solid #bdbab4;border-bottom:none;border-radius:3px 3px 0 0;z-index:2"></div>
<div class="t" style="left:190.5px;top:40.5px;z-index:3">Обработка</div>
<div class="a" style="left:280.5px;top:37px;width:66.80000000000001px;height:26px;background:linear-gradient(#eceae6,#e4e1dc);border:1px solid #c5c2bc;border-bottom:none;border-radius:3px 3px 0 0"></div>
<div class="t" style="left:292.5px;top:41.7px;">Связи</div>
<div class="a" style="left:5px;top:62px;width:1257px;height:758px;background:#f9f6f2;border:1px solid #b5b2ac"></div>
<div class="a" style="left:7px;top:64px;width:1253px;height:262px;background:#fcf9f5;border:1px solid #cbc8c2"></div>
<div class="a" style="left:7px;top:330px;width:1253px;height:489px;background:#fcf9f5;border:1px solid #cbc8c2"></div>
<svg class="a" style="left:627px;top:326px" width="16" height="3"><g fill="#b5b2ac"><circle cx="1" cy="1.5" r=".7"/><circle cx="4" cy="1.5" r=".7"/><circle cx="7" cy="1.5" r=".7"/><circle cx="10" cy="1.5" r=".7"/><circle cx="13" cy="1.5" r=".7"/></g></svg>
<div class="a" style="left:17px;top:74px;width:1233px;height:210px;border:1px solid #bdbab4;background:#fff;overflow:hidden"><div class="a" style="left:-1px;top:-1px;width:1232.5px;height:210px"><div class="a" style="left:0;top:0;width:1232.5px;height:21px;background:linear-gradient(#faf9f7,#ebe8e4);border-bottom:1px solid #c8c5bf"></div>
<div class="t" style="left:3.5px;top:2.5px;width:217px;overflow:hidden">Идентификатор</div>
<div class="a" style="left:222.3px;top:1px;width:1px;height:19px;background:#d6d3ce"></div>
<div class="t" style="left:225.3px;top:2.5px;width:96px;overflow:hidden">Имя</div>
<div class="a" style="left:322.29999999999995px;top:1px;width:1px;height:19px;background:#d6d3ce"></div>
<div class="t" style="left:325.29999999999995px;top:2.5px;width:96px;overflow:hidden">Тип данных</div>
<div class="a" style="left:422.29999999999995px;top:1px;width:1px;height:19px;background:#d6d3ce"></div>
<div class="t" style="left:425.29999999999995px;top:2.5px;width:96px;overflow:hidden">Рабочая обла</div>
<div class="a" style="left:522.3px;top:1px;width:1px;height:19px;background:#d6d3ce"></div>
<div class="t" style="left:525.3px;top:2.5px;width:96px;overflow:hidden">Обработка</div>
<div class="a" style="left:622.3px;top:1px;width:1px;height:19px;background:#d6d3ce"></div>
<div class="t" style="left:625.3px;top:2.5px;width:96px;overflow:hidden">Конфигураци</div>
<div class="a" style="left:722.3px;top:1px;width:1px;height:19px;background:#d6d3ce"></div>
<div class="t" style="left:725.3px;top:2.5px;width:396px;overflow:hidden">Конфигурационный шаблон</div>
<div class="a" style="left:0;top:22px;width:1217px;height:17px;background:#f5f4f2"></div>
<div class="t" style="left:44.80000000000001px;top:22px;">bordWidth</div>
<div class="t" style="left:225.5px;top:22px;">Граница: ш…</div>
<div class="t" style="left:325.5px;top:22px;">Целый</div>
<div class="t" style="left:425.5px;top:22px;">|</div>
<div class="t" style="left:625.5px;top:22px;">Нет</div>
<div class="a" style="left:0;top:39px;width:1217px;height:17px;background:#fff"></div>
<div class="t" style="left:44.80000000000001px;top:39px;">bordColor</div>
<div class="t" style="left:225.5px;top:39px;">Граница: ц…</div>
<div class="t" style="left:325.5px;top:39px;">Цвет</div>
<div class="t" style="left:425.5px;top:39px;">|</div>
<div class="t" style="left:625.5px;top:39px;">Нет</div>
<div class="a" style="left:0;top:56px;width:1217px;height:17px;background:#f5f4f2"></div>
<div class="t" style="left:44.80000000000001px;top:56px;">bordStyle</div>
<div class="t" style="left:225.5px;top:56px;">Граница: ст…</div>
<div class="t" style="left:325.5px;top:56px;">Выбор цел…</div>
<div class="t" style="left:425.5px;top:56px;">0;1;2;3;4;5;…</div>
<div class="t" style="left:625.5px;top:56px;">Нет</div>
<div class="a" style="left:0;top:73px;width:1217px;height:17px;background:#fff"></div>
<div class="t" style="left:44.80000000000001px;top:73px;">User</div>
<div class="t" style="left:225.5px;top:73px;">Новый атр…</div>
<div class="t" style="left:325.5px;top:73px;">Строка</div>
<div class="t" style="left:425.5px;top:73px;">|</div>
<svg class="a" style="left:563px;top:74.5px" width="19" height="15"><path d="M1 1.3 L6.2 6.3 L17.7 0.8 L4.4 13.1 Z" fill="#1ed21e" stroke="#119011" stroke-width=".7" stroke-linejoin="round"/></svg>
<div class="t" style="left:625.5px;top:73px;">Нет</div>
<div class="a" style="left:0;top:90px;width:1217px;height:17px;background:#f5f4f2"></div>
<div class="t" style="left:44.80000000000001px;top:90px;">GLOBAL_ALARM2</div>
<div class="t" style="left:225.5px;top:90px;">Общая ава…</div>
<div class="t" style="left:325.5px;top:90px;">Логический</div>
<div class="t" style="left:425.5px;top:90px;">|</div>
<div class="t" style="left:625.5px;top:90px;">Нет</div>
<div class="a" style="left:0;top:107px;width:1217px;height:17px;background:#fff"></div>
<div class="t" style="left:44.80000000000001px;top:107px;">GLOBAL_ALARM1</div>
<div class="t" style="left:225.5px;top:107px;">Общая ава…</div>
<div class="t" style="left:325.5px;top:107px;">Логический</div>
<div class="t" style="left:425.5px;top:107px;">|</div>
<svg class="a" style="left:563px;top:108.5px" width="19" height="15"><path d="M1 1.3 L6.2 6.3 L17.7 0.8 L4.4 13.1 Z" fill="#1ed21e" stroke="#119011" stroke-width=".7" stroke-linejoin="round"/></svg>
<div class="t" style="left:625.5px;top:107px;">Полная св…</div>
<div class="t" style="left:725.5px;top:107px;">AHU|GLOBAL_ALARM</div>
<div class="a" style="left:0;top:124px;width:1217px;height:17px;background:#f5f4f2"></div>
<svg class="a" style="left:7.5px;top:127.5px" width="7" height="10"><path d="M0.5 0.5 L6 5 L0.5 9.5 Z" fill="#3c3c3c"/></svg>
<div class="t" style="left:24px;top:124px;">BT1</div>
<div class="a" style="left:0;top:141px;width:1217px;height:17px;background:#308cc6"></div>
<svg class="a" style="left:7.5px;top:144.5px" width="7" height="10"><path d="M0.5 0.5 L6 5 L0.5 9.5 Z" fill="#1a2a3a"/></svg>
<div class="t" style="left:24px;top:141px;color:#fff">BT10</div>
<div class="a" style="left:0;top:158px;width:1217px;height:17px;background:#f5f4f2"></div>
<svg class="a" style="left:7.5px;top:161.5px" width="7" height="10"><path d="M0.5 0.5 L6 5 L0.5 9.5 Z" fill="#3c3c3c"/></svg>
<div class="t" style="left:24px;top:158px;">BT11</div>
<div class="a" style="left:0;top:175px;width:1217px;height:17px;background:#fff"></div>
<svg class="a" style="left:7.5px;top:178.5px" width="7" height="10"><path d="M0.5 0.5 L6 5 L0.5 9.5 Z" fill="#3c3c3c"/></svg>
<div class="t" style="left:24px;top:175px;">BT12</div>
<div class="a" style="left:0;top:192px;width:1217px;height:17px;background:#f5f4f2"></div>
<svg class="a" style="left:7.5px;top:195.5px" width="7" height="10"><path d="M0.5 0.5 L6 5 L0.5 9.5 Z" fill="#3c3c3c"/></svg>
<div class="t" style="left:24px;top:192px;">BT13</div>
<div class="a" style="left:1217px;top:0;width:15px;height:209px;background:#dfddd9;border-left:1px solid #cfccc7"></div>
<div class="a" style="left:1217px;top:0;width:15px;height:14.5px;background:linear-gradient(#fff,#f3f2f0);border:1px solid #cfccc7"></div>
<svg class="a" style="left:1219.5px;top:4px" width="10" height="6"><path d="M0.5 5.5 L9.5 5.5 L5 0.5 Z" fill="#555"/></svg>
<div class="a" style="left:1217px;top:114.5px;width:15px;height:41px;background:linear-gradient(90deg,#f4f3f1,#fdfdfc);border:1px solid #cfccc7"></div>
<div class="a" style="left:1217px;top:195.5px;width:15px;height:14px;background:linear-gradient(#fff,#f3f2f0);border:1px solid #cfccc7"></div>
<svg class="a" style="left:1219.5px;top:199.5px" width="10" height="6"><path d="M0.5 0.5 L9.5 0.5 L5 5.5 Z" fill="#555"/></svg></div></div>
<div class="a btn" style="left:17px;top:291.3px;width:613.5px;height:24px"></div>
<div class="t" style="left:17px;top:295px;width:613.5px;text-align:center">Добавить атрибут</div>
<div class="a btn" style="left:637.5px;top:291.3px;width:612.5px;height:24px"></div>
<div class="t" style="left:637.5px;top:295px;width:612.5px;text-align:center">Удалить атрибут</div>
<div class="t" style="left:17.5px;top:344px;">Язык процедуры:</div>
<div class="a btn" style="left:147.3px;top:340.6px;width:360.7px;height:24px"></div>
<div class="t" style="left:152.60000000000002px;top:344px;">JavaLikeCalc.JavaScript</div>
<svg class="a" style="left:493.5px;top:350px" width="9" height="5"><path d="M0 0 L9 0 L4.5 5 Z" fill="#444"/></svg>
<div class="t" style="left:515.5px;top:344px;">Период вычисления, миллисекунд:</div>
<div class="a" style="left:773.4px;top:340.6px;width:360.19999999999993px;height:24px;background:#fff;border:1px solid #bab7b1;border-radius:3px"></div>
<div class="t" style="left:776px;top:344px;">-1</div>
<div class="t" style="left:1140.4px;top:344px;">Переводить:</div>
<div class="a" style="left:1236.4px;top:345.2px;width:13.5px;height:14px;background:#fff;border:1px solid #aaa7a1;border-radius:1px"></div>
<div class="a" style="left:17px;top:371px;width:1233px;height:438px;background:#fff;border:1px solid #b5b2ac;overflow:hidden"><div class="a" style="left:-1px;top:5.20px"><div class="cl" style="left:5.399999999999977px;top:0.00px"> req <b class="o">=</b> SYS.XMLNode<span class="p">(</span>"<span class="s">get</span>"<span class="p">)</span>.setAttr<span class="p">(</span>"<span class="s">path</span>","<span class="s">/sub_UI/mod_VCAEngine/ses_AHU/%2fobj%2fst%2fuser</span>"<span class="p">)</span><span class="p">;</span></div>
<div class="cl" style="left:5.399999999999977px;top:17.71px"> SYS.cntrReq<span class="p">(</span>req<span class="p">)</span><span class="p">;</span></div>
<div class="cl" style="left:5.399999999999977px;top:35.42px">User<b class="o">=</b>req.text<span class="p">()</span><span class="p">;</span></div>
<div class="cl" style="left:5.399999999999977px;top:53.13px"><i class="c">//BT2_name=User;</i></div>
<div class="cl" style="left:45.39999999999998px;top:70.84px"><b class="k">if</b><span class="p">(</span>User<b class="o">==</b>"<span class="s">admin</span>"<span class="p">)</span><span class="p">{</span></div>
<div class="cl" style="left:65.39999999999998px;top:88.55px">BT16_active<b class="o">=</b><span class="n">1</span><span class="p">;</span></div>
<div class="cl" style="left:65.39999999999998px;top:106.26px"><span class="p">}</span></div>
<div class="cl" style="left:45.39999999999998px;top:123.97px"><b class="k">else</b><span class="p">{</span></div>
<div class="cl" style="left:65.39999999999998px;top:141.68px">BT16_active<b class="o">=</b><span class="n">0</span><span class="p">;</span></div>
<div class="cl" style="left:65.39999999999998px;top:159.39px"><span class="p">}</span></div>
<div class="cl" style="left:105.39999999999998px;top:177.10px"><b class="k">if</b><span class="p">(</span>GLOBAL_ALARM1<b class="o">==</b><span class="n">1</span> <b class="o">||</b> GLOBAL_ALARM1<b class="o">&lt;-</b><span class="n">1</span><span class="p">)</span><span class="p">{</span></div>
<div class="cl" style="left:145.39999999999998px;top:194.81px">Alarm_Label_en<b class="o">=</b><span class="n">1</span><span class="p">;</span></div>
<div class="cl" style="left:145.39999999999998px;top:212.52px"><span class="p">}</span></div>
<div class="cl" style="left:105.39999999999998px;top:230.23px"><b class="k">else</b><span class="p">{</span></div>
<div class="cl" style="left:145.39999999999998px;top:247.94px">Alarm_Label_en<b class="o">=</b><span class="n">0</span><span class="p">;</span></div>
<div class="cl" style="left:145.39999999999998px;top:265.65px"><span class="p">}</span></div></div></div>
<div class="a btn" style="left:1174.4px;top:827.3px;width:87.2px;height:24.5px"></div>
<svg class="a" style="left:1181px;top:833px" width="12" height="12"><path d="M1.5 1.5 L10.5 10.5 M10.5 1.5 L1.5 10.5" stroke="#6a6a6a" stroke-width="3.2"/></svg>
<div class="t" style="left:1196.25px;top:831px;"><u>З</u>акрыть</div>
</div>
</body></html>
